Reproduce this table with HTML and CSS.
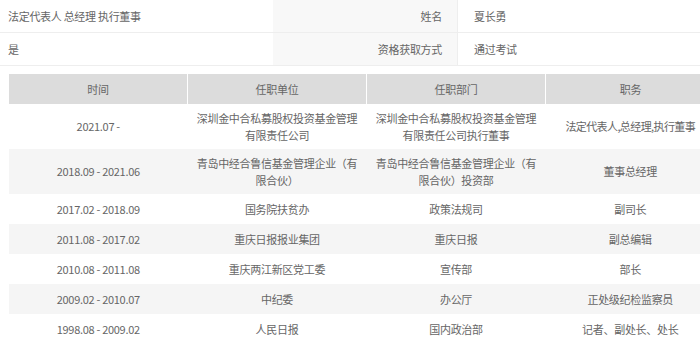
FILE: index.html
```html
<!DOCTYPE html>
<html>
<head>
<meta charset="utf-8">
<link rel="stylesheet" href="styles.css">
</head>
<body>
<div class="info">
  <div class="irow">
    <div class="ival first">法定代表人 总经理 执行董事</div>
    <div class="ilabel">姓名</div>
    <div class="ival">夏长勇</div>
  </div>
  <div class="irow">
    <div class="ival first">是</div>
    <div class="ilabel">资格获取方式</div>
    <div class="ival">通过考试</div>
  </div>
</div>
<table class="career">
  <thead>
    <tr><th>时间</th><th>任职单位</th><th>任职部门</th><th>职务</th></tr>
  </thead>
  <tbody>
    <tr class="tall"><td>2021.07 -</td><td>深圳金中合私募股权投资基金管理<br>有限责任公司</td><td>深圳金中合私募股权投资基金管理<br>有限责任公司执行董事</td><td class="tight">法定代表人,总经理,执行董事</td></tr>
    <tr class="tall"><td>2018.09 - 2021.06</td><td>青岛中经合鲁信基金管理企业（有<br>限合伙）</td><td>青岛中经合鲁信基金管理企业（有<br>限合伙）投资部</td><td>董事总经理</td></tr>
    <tr><td>2017.02 - 2018.09</td><td>国务院扶贫办</td><td>政策法规司</td><td>副司长</td></tr>
    <tr><td>2011.08 - 2017.02</td><td>重庆日报报业集团</td><td>重庆日报</td><td>副总编辑</td></tr>
    <tr><td>2010.08 - 2011.08</td><td>重庆两江新区党工委</td><td>宣传部</td><td>部长</td></tr>
    <tr><td>2009.02 - 2010.07</td><td>中纪委</td><td>办公厅</td><td>正处级纪检监察员</td></tr>
    <tr><td>1998.08 - 2009.02</td><td>人民日报</td><td>国内政治部</td><td>记者、副处长、处长</td></tr>
  </tbody>
</table>
</body>
</html>
```

FILE: styles.css
```css
html, body {
  margin: 0;
  padding: 0;
  background: #fff;
  overflow: hidden;
  width: 700px;
  height: 350px;
}
body {
  font-family: "Noto Sans CJK SC", "Liberation Sans", sans-serif;
  font-size: 11px;
  letter-spacing: -0.3px;
  color: #666;
}
.info {
  width: 760px;
}
.irow {
  display: grid;
  grid-template-columns: 273px 185px 1fr;
  height: 33px;
  border-bottom: 1px solid #eeeeee;
  box-sizing: border-box;
}
.ival {
  display: flex;
  align-items: center;
  padding-left: 16px;
  white-space: nowrap;
}
.ival.first {
  padding-left: 8px;
}
.ilabel {
  display: flex;
  align-items: center;
  justify-content: flex-end;
  padding-right: 15px;
  background: #f8f8f8;
  border-right: 1px solid #eeeeee;
  white-space: nowrap;
}
.career {
  margin: 8px 0 0 9px;
  border-collapse: collapse;
  table-layout: fixed;
  width: 706px;
}
.career th {
  background: #dcdcdc;
  font-weight: normal;
  color: #666;
  height: 30px;
  padding: 0;
  border-left: 1px solid #fff;
  line-height: 16px;
}
.career th:nth-child(1),
.career th:nth-child(2),
.career th:nth-child(3) {
  width: 178px;
}
.career th:first-child {
  border-left: none;
}
.career td {
  text-align: center;
  height: 30px;
  padding: 0;
  line-height: 17px;
  white-space: nowrap;
}
.career td.tight {
  letter-spacing: -0.6px;
}
.career tr.tall td {
  height: 45px;
}
.career tbody tr:nth-child(even) td {
  background: #f5f5f5;
}
```
